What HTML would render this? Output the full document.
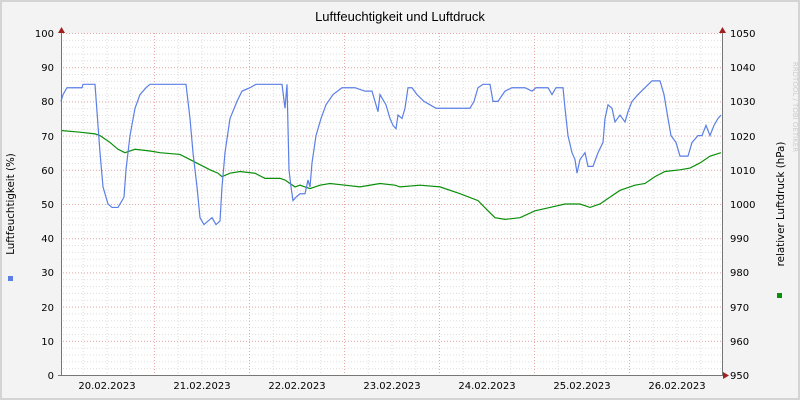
<!DOCTYPE html><html><head><style>body{margin:0}svg{display:block}text{font-family:"DejaVu Sans","Liberation Sans",sans-serif}.l{font-family:"Liberation Sans",sans-serif}</style></head><body>
<svg width="800" height="400" xmlns="http://www.w3.org/2000/svg">
<defs>
<pattern id="hm" patternUnits="userSpaceOnUse" x="0" y="33" width="800" height="6.84"><line x1="0" x2="800" y1="0.5" y2="0.5" stroke="#ddd" stroke-dasharray="1,2"/></pattern>
<pattern id="hM" patternUnits="userSpaceOnUse" x="0" y="33" width="800" height="34.2"><line x1="0" x2="800" y1="0.5" y2="0.5" stroke="#e6a8a8" stroke-dasharray="1,2"/></pattern>
<pattern id="vm" patternUnits="userSpaceOnUse" x="59" y="0" width="23.75" height="400"><line y1="0" y2="400" x1="0.5" x2="0.5" stroke="#ddd" stroke-dasharray="1,2"/></pattern>
<pattern id="vM" patternUnits="userSpaceOnUse" x="59" y="0" width="95" height="400"><line y1="0" y2="400" x1="0.5" x2="0.5" stroke="#e6a8a8" stroke-dasharray="1,2"/></pattern>
</defs>
<rect width="800" height="400" fill="#d4d4d4"/>
<rect x="2" y="2" width="796" height="396" fill="#f3f3f3"/>
<rect x="61" y="33" width="662" height="342" fill="#fff"/>
<rect x="62" y="33" width="661" height="342" fill="url(#vm)"/>
<rect x="61" y="33" width="662" height="342" fill="url(#hm)"/>
<rect x="62" y="33" width="661" height="342" fill="url(#vM)"/>
<rect x="61" y="33" width="662" height="342" fill="url(#hM)"/>
<text class="l" x="400" y="21" font-size="13" text-anchor="middle">Luftfeuchtigkeit und Luftdruck</text>
<text transform="translate(14,204) rotate(-90)" font-size="10.3" text-anchor="middle">Luftfeuchtigkeit (%)</text>
<text transform="translate(784,204) rotate(-90)" font-size="10.3" text-anchor="middle">relativer Luftdruck (hPa)</text>
<text transform="translate(793,107) rotate(90)" font-size="7" text-anchor="middle" fill="#ccc">RRDTOOL / TOBI OETIKER</text>
<rect x="8" y="276" width="5" height="5" fill="#5b7fe6"/>
<rect x="777" y="293" width="5" height="5" fill="#0a8f0a"/>
<g class="l" font-size="10" text-anchor="end">
<text x="54" y="379">0</text><text x="54" y="345">10</text><text x="54" y="311">20</text><text x="54" y="276">30</text><text x="54" y="242">40</text><text x="54" y="208">50</text><text x="54" y="174">60</text><text x="54" y="140">70</text><text x="54" y="105">80</text><text x="54" y="71">90</text><text x="54" y="37">100</text>
</g>
<g class="l" font-size="10">
<text x="730" y="379">950</text><text x="730" y="345">960</text><text x="730" y="311">970</text><text x="730" y="276">980</text><text x="730" y="242">990</text><text x="730" y="208">1000</text><text x="730" y="174">1010</text><text x="730" y="140">1020</text><text x="730" y="105">1030</text><text x="730" y="71">1040</text><text x="730" y="37">1050</text>
</g>
<g class="l" font-size="10" text-anchor="middle">
<text x="107" y="389">20.02.2023</text><text x="202" y="389">21.02.2023</text><text x="297" y="389">22.02.2023</text><text x="392" y="389">23.02.2023</text><text x="487" y="389">24.02.2023</text><text x="582" y="389">25.02.2023</text><text x="677" y="389">26.02.2023</text>
</g>
<g transform="translate(0,375) scale(1,-3.42)" fill="none">
<polyline vector-effect="non-scaling-stroke" stroke="#0a8f0a" stroke-width="1.2" points="61,71.5 80,71 95,70.5 100,70 110,68 118,66 125,65 135,66 150,65.5 160,65 180,64.5 190,63 200,61.5 210,60 218,59 222,58 230,59 240,59.5 255,59 265,57.5 280,57.5 285,57 290,56 295,55 300,55.5 305,55 310,54.5 320,55.5 330,56 345,55.5 360,55 380,56 395,55.5 400,55 420,55.5 440,55 460,53 478,51 488,48 495,46 505,45.5 520,46 535,48 550,49 565,50 580,50 590,49 600,50 610,52 620,54 635,55.5 645,56 655,58 665,59.5 680,60 690,60.5 700,62 710,64 721,65"/>
<polyline vector-effect="non-scaling-stroke" stroke="#5b7fe6" stroke-width="1.2" points="61,80 63,82 67,84 82,84 83,85 95,85 97,77 100,65 103,55 108,50 112,49 118,49 124,52 126,60 130,70 135,78 140,82 146,84 150,85 157,85 186,85 188,80 190,75 193,65 197,55 200,46 204,44 208,45 212,46 216,44 220,45 222,55 225,65 230,75 237,80 242,83 250,84 256,85 282,85 285,78 287,85 289,60 291,55 293,51 296,52 300,53 305,53 308,57 310,55 312,62 316,70 321,75 326,79 333,82 342,84 355,84 365,83 372,83 375,80 378,77 380,82 384,80 386,79 390,75 393,73 396,72 398,76 402,75 405,78 408,84 412,84 417,82 424,80 430,79 436,78 470,78 474,80 478,84 483,85 490,85 493,80 498,80 505,83 512,84 525,84 532,83 536,84 548,84 552,82 556,84 563,84 565,78 568,70 572,65 575,63 577,59 580,63 585,65 588,61 593,61 598,65 603,68 605,75 608,79 612,78 615,74 620,76 625,74 628,77 632,80 638,82 645,84 652,86 660,86 664,82 668,75 671,70 676,68 680,64 688,64 692,68 698,70 702,70 706,73 710,70 714,73 718,75 721,76"/>
</g>
<line x1="61.5" x2="61.5" y1="30" y2="375" stroke="#777"/>
<line x1="722.5" x2="722.5" y1="30" y2="375" stroke="#777"/>
<line x1="58" x2="726" y1="375.5" y2="375.5" stroke="#777"/>
<polygon points="58,33 65,33 61.5,27" fill="#a02020"/>
<polygon points="719,33 726,33 722.5,27" fill="#a02020"/>
<polygon points="723,372 723,379 729,375.5" fill="#a02020"/>
</svg></body></html>
